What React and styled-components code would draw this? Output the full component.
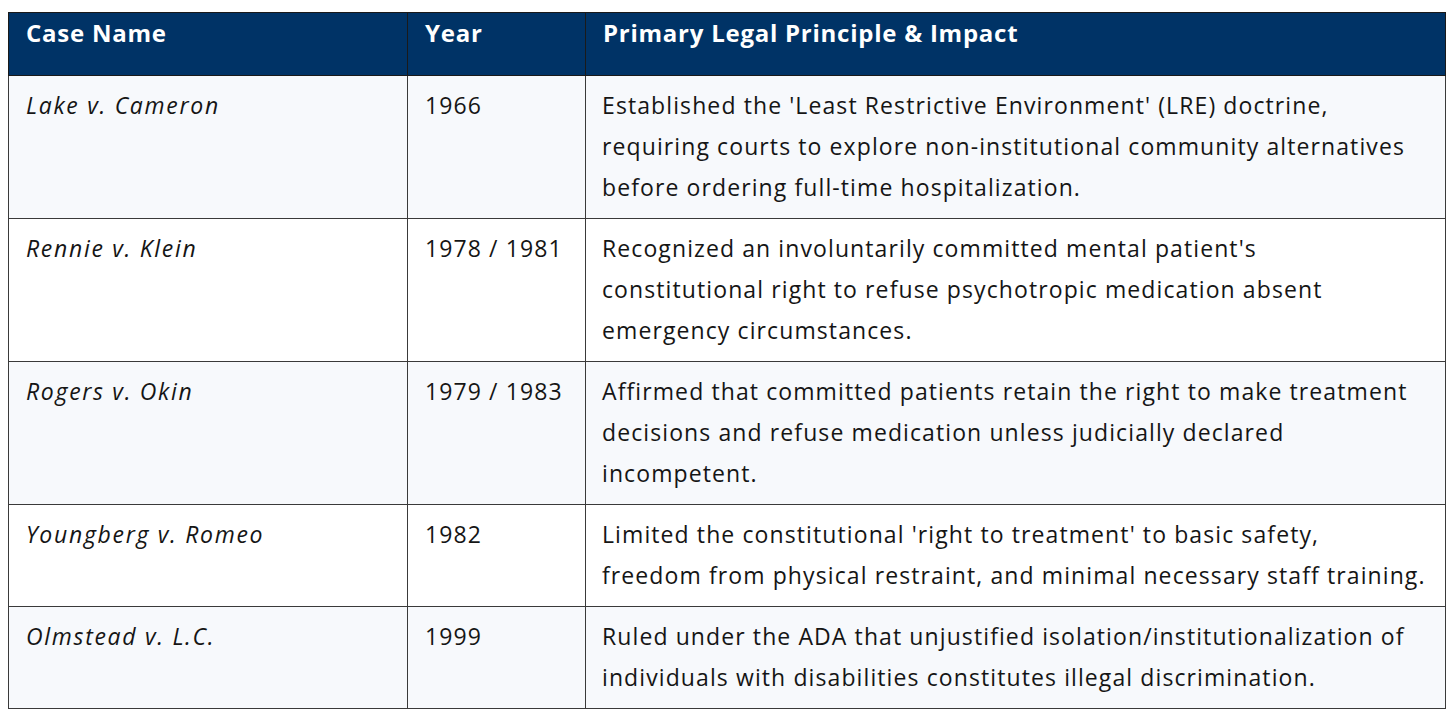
import React from 'react';
import styled, { createGlobalStyle } from 'styled-components';

const GlobalStyle = createGlobalStyle`
    *, *::before, *::after {
        box-sizing: border-box;
    }
    html, body {
        margin: 0;
        padding: 0;
        background: #ffffff;
    }
    body {
        font-family: 'Open Sans', 'Noto Sans', Arial, sans-serif;
        color: #111111;
    }
`;

const Page = styled.div`
    padding: 12px 11px 0 8px;
`;

const Table = styled.table`
    width: 1437px;
    border-collapse: collapse;
    table-layout: fixed;
    border: 1px solid #222;
`;

const HeadCell = styled.th`
    background: #003366;
    color: #ffffff;
    font-weight: 700;
    font-size: 24px;
    letter-spacing: 0.75px;
    text-align: left;
    vertical-align: top;
    line-height: 30px;
    padding: 5px 10px 27px 17px;
    border: 1px solid #1a1a1a;
`;

const Row = styled.tr`
    background: ${(props) => (props.shaded ? '#f7f9fc' : '#ffffff')};
`;

const Cell = styled.td`
    font-size: 23px;
    font-style: ${(props) => (props.italic ? 'italic' : 'normal')};
    letter-spacing: ${(props) => (props.italic ? '1.7px' : '1.1px')};
    line-height: 41px;
    vertical-align: top;
    padding: 9px 6px 10px ${(props) => (props.wide ? '16px' : '17px')};
    border: 1px solid #3a3a3a;
    color: #151515;
`;

const Line = styled.span`
    display: block;
    white-space: nowrap;
`;

const columns = [399, 178, 860];

const cases = [
    {
        name: 'Lake v. Cameron',
        year: '1966',
        lines: [
            "Established the 'Least Restrictive Environment' (LRE) doctrine,",
            'requiring courts to explore non-institutional community alternatives',
            'before ordering full-time hospitalization.',
        ],
    },
    {
        name: 'Rennie v. Klein',
        year: '1978 / 1981',
        lines: [
            "Recognized an involuntarily committed mental patient's",
            'constitutional right to refuse psychotropic medication absent',
            'emergency circumstances.',
        ],
    },
    {
        name: 'Rogers v. Okin',
        year: '1979 / 1983',
        lines: [
            'Affirmed that committed patients retain the right to make treatment',
            'decisions and refuse medication unless judicially declared',
            'incompetent.',
        ],
    },
    {
        name: 'Youngberg v. Romeo',
        year: '1982',
        lines: [
            "Limited the constitutional 'right to treatment' to basic safety,",
            'freedom from physical restraint, and minimal necessary staff training.',
        ],
    },
    {
        name: 'Olmstead v. L.C.',
        year: '1999',
        lines: [
            'Ruled under the ADA that unjustified isolation/institutionalization of',
            'individuals with disabilities constitutes illegal discrimination.',
        ],
    },
];

const App = () => (
    <Page>
        <GlobalStyle />
        <Table>
            <colgroup>
                {columns.map((w) => (
                    <col key={w} style={{ width: w }} />
                ))}
            </colgroup>
            <thead>
                <tr>
                    <HeadCell>Case Name</HeadCell>
                    <HeadCell>Year</HeadCell>
                    <HeadCell>Primary Legal Principle &amp; Impact</HeadCell>
                </tr>
            </thead>
            <tbody>
                {cases.map((item, i) => (
                    <Row key={item.name} shaded={i % 2 === 0}>
                        <Cell italic>{item.name}</Cell>
                        <Cell>{item.year}</Cell>
                        <Cell wide>
                            {item.lines.map((line) => (
                                <Line key={line}>{line}</Line>
                            ))}
                        </Cell>
                    </Row>
                ))}
            </tbody>
        </Table>
    </Page>
);

export default App;
